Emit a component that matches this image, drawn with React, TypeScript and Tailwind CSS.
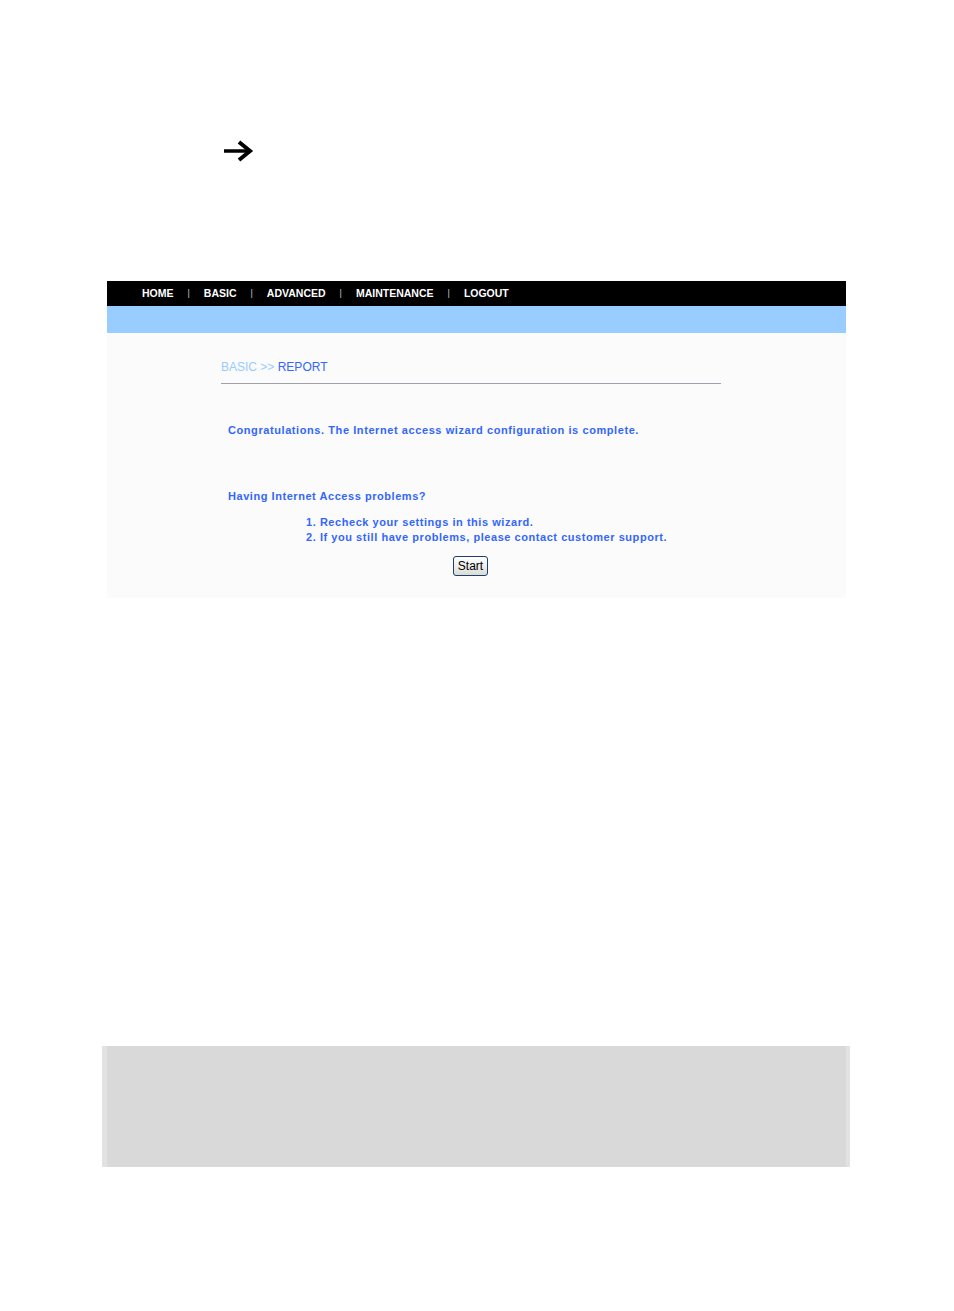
import React from 'react';

const navItems = ['HOME', 'BASIC', 'ADVANCED', 'MAINTENANCE', 'LOGOUT'];

const App: React.FC = () => {
  return (
    <div className="w-[954px] h-[1311px] bg-white relative" style={{ fontFamily: '"Liberation Sans", Arial, sans-serif' }}>
      {/* arrow */}
      <div className="pt-[138px] pl-[222px] h-[281px]">
        <svg width="32" height="26" viewBox="0 0 32 26">
          <path d="M2 13 H26" stroke="#000" strokeWidth="3.5" fill="none" />
          <path d="M17 4 L28 13 L17 22" stroke="#000" strokeWidth="4" fill="none" strokeLinejoin="miter" />
        </svg>
      </div>

      {/* router panel */}
      <div className="ml-[107px] w-[739px]">
        <div className="h-[25px] bg-black flex items-center pl-[35px] text-white text-[10.5px] font-bold">
          {navItems.map((item, i) => (
            <React.Fragment key={item}>
              {i > 0 && <span className="mx-[14px] text-[9px] font-normal text-[#c8c8c8]">|</span>}
              <span>{item}</span>
            </React.Fragment>
          ))}
        </div>
        <div className="h-[27px] bg-[#99ccff]" />
        <div className="h-[265px] bg-[#fbfbfb] pl-[114px]">
          <div className="w-[500px] pt-[25px] border-b border-[#a0a0a8] pb-[7px] text-[12px]">
            <span className="text-[#99ccff]">BASIC &gt;&gt; </span>
            <span className="text-[#3366ff]">REPORT</span>
          </div>
          <div className="pl-[7px] text-[#3366ff] text-[11px] font-bold">
            <p className="mt-[38px] tracking-[0.58px]">Congratulations. The Internet access wizard configuration is complete.</p>
            <p className="mt-[49px] tracking-[0.55px]">Having Internet Access problems?</p>
            <div className="mt-[11px] pl-[78px] leading-[15px] tracking-[0.55px]">
              <p>1. Recheck your settings in this wizard.</p>
              <p>2. If you still have problems, please contact customer support.</p>
            </div>
            <div className="mt-[11px] pl-[225px]">
              <button className="h-[20px] w-[35px] rounded-[3px] border border-[#1c3f6e] bg-gradient-to-b from-white to-[#dcdcd6] text-black text-[12px] font-normal leading-none tracking-normal">
                Start
              </button>
            </div>
          </div>
        </div>
      </div>

      {/* gray box */}
      <div className="absolute left-[102px] top-[1046px] w-[748px] h-[121px] bg-[#e2e2e2] flex">
        <div className="ml-[5px] mr-[4px] flex-1 bg-[#d9d9d9]" />
      </div>
    </div>
  );
};

export default App;
